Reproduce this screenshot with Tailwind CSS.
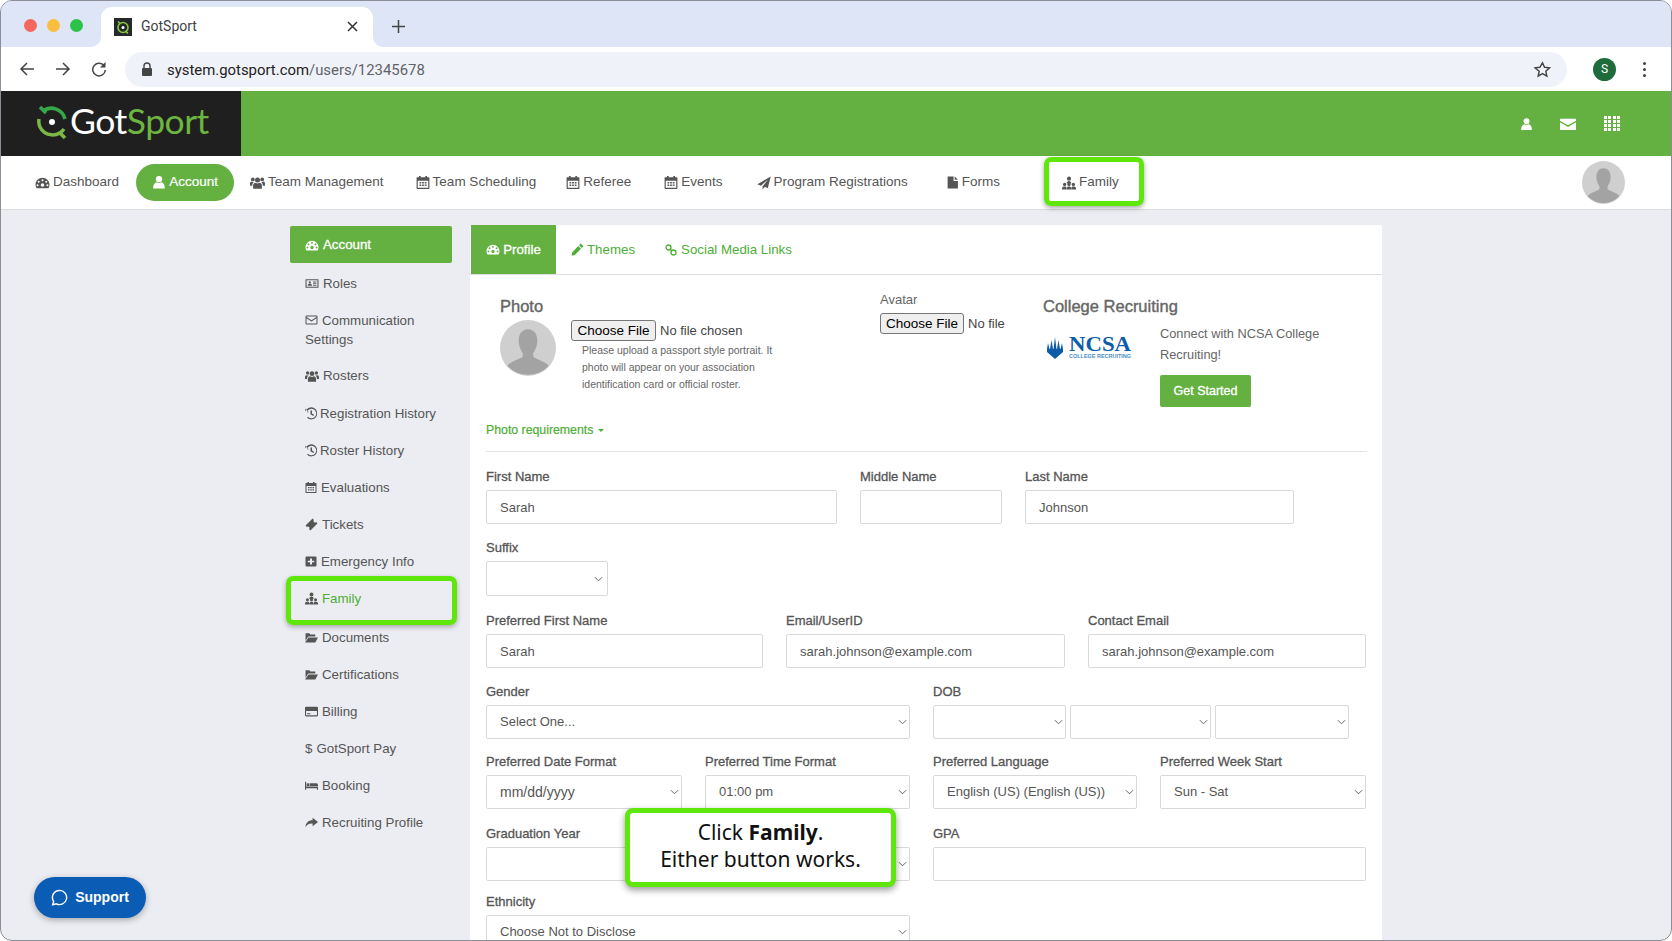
<!DOCTYPE html>
<html lang="en">
<head>
  <meta charset="UTF-8" />
  <title>GotSport</title>
  <script src="https://cdn.jsdelivr.net/npm/@tailwindcss/browser@4"></script>
</head>
<body class="bg-white overflow-hidden font-['Liberation_Sans',Arial,sans-serif]">

  <!-- Icon sprite -->
  <svg class="hidden">
    <symbol id="i-user" viewBox="0 0 24 24"><circle cx="12" cy="7" r="5.5"/><path d="M2 23c0-7 3-10 6-10.500 2.500 1.500 5.500 1.500 8 0 3 .5 6 3.500 6 10.500z"/></symbol>
    <symbol id="i-users" viewBox="0 0 24 24"><circle cx="12" cy="8" r="4"/><circle cx="4.500" cy="7" r="3"/><circle cx="19.500" cy="7" r="3"/><path d="M5 22v-5c0-3 2-4.500 4-4.500 2 1.500 4 1.500 6 0 2 0 4 1.500 4 4.500v5z"/><path d="M0 17v-3c0-2 1-3.500 2.500-3.500 1.500 1 3 1 4 .5-2 1-3 3-3 6zM24 17v-3c0-2-1-3.500-2.500-3.500-1.500 1-3 1-4 .5 2 1 3 3 3 6z"/></symbol>
    <symbol id="i-gauge" viewBox="0 0 24 24"><path fill-rule="evenodd" d="M12 3C5.500 3 0 8.500 0 15c0 2.500.7 4.500 2 6h20c1.300-1.500 2-3.500 2-6 0-6.500-5.500-12-12-12zM12 5.500a1.700 1.700 0 1 1 0 3.400 1.700 1.700 0 0 1 0-3.400zM5.500 8a1.700 1.700 0 1 1 0 3.400 1.700 1.700 0 0 1 0-3.400zM18.500 8a1.700 1.700 0 1 1 0 3.400 1.700 1.700 0 0 1 0-3.400zM3.500 14a1.700 1.700 0 1 1 0 3.400 1.700 1.700 0 0 1 0-3.400zM20.500 14a1.700 1.700 0 1 1 0 3.400 1.700 1.700 0 0 1 0-3.400zM12 12.500a3 3 0 0 1 3 3c0 1.700-1.300 3-3 3s-3-1.300-3-3a3 3 0 0 1 3-3z"/></symbol>
    <symbol id="i-cal" viewBox="0 0 24 24"><path fill-rule="evenodd" d="M2 3h3V1h3v2h8V1h3v2h3a1 1 0 0 1 1 1v18a1 1 0 0 1-1 1H2a1 1 0 0 1-1-1V4a1 1 0 0 1 1-1zM3 9v12h18V9z"/><path d="M6 11h3v2.500H6zM10.500 11h3v2.500h-3zM15 11h3v2.500h-3zM6 15.500h3V18H6zM10.500 15.500h3V18h-3zM15 15.500h3V18h-3z"/></symbol>
    <symbol id="i-plane" viewBox="0 0 24 24"><path d="M23.500 1 .5 14l6.500 2.500L19 6 9.500 18v5l4-4.500 5 2.500z"/></symbol>
    <symbol id="i-file" viewBox="0 0 24 24"><path d="M3 1h11v8h8v14H3zM16 1l6 6h-6z"/></symbol>
    <symbol id="i-family" viewBox="0 0 24 24"><circle cx="12" cy="4.500" r="3.500"/><path d="M8 13c0-3 2-4.500 4-4.500s4 1.500 4 4.500z"/><circle cx="4.500" cy="14.500" r="2.800"/><circle cx="12" cy="14.500" r="2.800"/><circle cx="19.500" cy="14.500" r="2.800"/><path d="M0 23v-2c0-2 2-3 4.500-3S8 19 8 21v2zM8.500 23v-2c0-2 1-3 3.500-3s3.500 1 3.500 3v2zM16 23v-2c0-2 1-3 3.500-3s4.500 1 4.500 3v2z"/></symbol>
    <symbol id="i-id" viewBox="0 0 24 24"><path fill-rule="evenodd" d="M1 4h22a1 1 0 0 1 1 1v14a1 1 0 0 1-1 1H1a1 1 0 0 1-1-1V5a1 1 0 0 1 1-1zM2 6v12h20V6z"/><circle cx="8" cy="10" r="2"/><path d="M4 16c0-2.500 1.500-3.500 4-3.500s4 1 4 3.500zM14 8.500h6V10h-6zM14 11.500h6V13h-6zM14 14.500h6V16h-6z"/></symbol>
    <symbol id="i-env" viewBox="0 0 24 24"><path fill-rule="evenodd" d="M2 3h20a2 2 0 0 1 2 2v14a2 2 0 0 1-2 2H2a2 2 0 0 1-2-2V5a2 2 0 0 1 2-2zM2 8.500V19h20V8.500l-10 6.500zM2 5v1.200L12 12.700 22 6.200V5z"/></symbol>
    <symbol id="i-mail" viewBox="0 0 24 24"><path d="M0 4h24v3L12 14 0 7zM0 9.500 12 16.500 24 9.500V21H0z"/></symbol>
    <symbol id="i-history" viewBox="0 0 24 24"><path d="M0 2l7.500 7.500H3.800A9.500 9.500 0 1 1 6 18.500l-1.800 2A12 12 0 1 0 1.200 7.500z"/><path d="M11 6h3v6l4 2.500-1.400 2.300-5.600-3.400z"/></symbol>
    <symbol id="i-ticket" viewBox="0 0 24 24"><path d="M14 1l2.500 2.500a2.500 2.500 0 0 0 4 4L23 10 10 23l-2.500-2.500a2.500 2.500 0 0 0-4-4L1 14z"/></symbol>
    <symbol id="i-plus" viewBox="0 0 24 24"><path fill-rule="evenodd" d="M3 2h18a2 2 0 0 1 2 2v16a2 2 0 0 1-2 2H3a2 2 0 0 1-2-2V4a2 2 0 0 1 2-2zM10 6v4.500H5.500v3H10V18h4v-4.500h4.500v-3H14V6z"/></symbol>
    <symbol id="i-folder" viewBox="0 0 24 24"><path d="M1 4h7l2 2.500h9V10H6l-5 8zM6.500 12H24l-5 9H0z"/></symbol>
    <symbol id="i-card" viewBox="0 0 24 24"><path fill-rule="evenodd" d="M2 3h20a2 2 0 0 1 2 2v14a2 2 0 0 1-2 2H2a2 2 0 0 1-2-2V5a2 2 0 0 1 2-2zM2 11v8h20v-8zM4 15h6v2H4z"/></symbol>
    <symbol id="i-bed" viewBox="0 0 24 24"><path d="M0 5h2v9h22v6h-2v-3H2v3H0z"/><rect x="3" y="8" width="5" height="5"/><path d="M9 8h12a3 3 0 0 1 3 3v2H9z"/></symbol>
    <symbol id="i-share" viewBox="0 0 24 24"><path d="M14 3l10 8-10 8v-5C8 14 4 15 1 21c0-8 5-13 13-13z"/></symbol>
    <symbol id="i-pencil" viewBox="0 0 24 24"><path d="M18 1l5 5-3 3-5-5zM13.500 5.500l5 5L7 22l-6 1.500L2.500 17z"/></symbol>
    <symbol id="i-link" viewBox="0 0 24 24"><g fill="none" stroke="currentColor" stroke-width="2.600"><circle cx="7" cy="7" r="5"/><circle cx="17" cy="17" r="5"/><path d="M9.500 9.500l5 5"/></g></symbol>
    <symbol id="i-chev" viewBox="0 0 10 6"><path d="M1 1l4 4 4-4" fill="none" stroke="#666" stroke-width="1.100"/></symbol>
    <symbol id="i-person" viewBox="0 0 54 54"><circle cx="27" cy="27" r="27" fill="#cfcfcf"/><path d="M27 9c6 0 9 5 9 11 0 5-2 9-4 12v3c0 2 10 4 15 9a27 27 0 0 1-40 0c5-5 15-7 15-9v-3c-2-3-4-7-4-12 0-6 3-11 9-11z" fill="#a3a3a3"/></symbol>
  </svg>

  <div class="relative w-full h-[941px] overflow-hidden rounded-[12px] border border-[#8b8e98] bg-[#ecedf2]">

    <!-- Browser tab strip -->
    <div class="relative flex items-end h-[46px] bg-[#dee5f6] pl-[23px]">
      <div class="flex items-center gap-[10px] h-[46px] pt-[2px]">
        <span class="w-[13px] h-[13px] rounded-full bg-[#f5685e]"></span>
        <span class="w-[13px] h-[13px] rounded-full bg-[#f9bd3f]"></span>
        <span class="w-[13px] h-[13px] rounded-full bg-[#2cc24a]"></span>
      </div>
      <div class="relative flex items-center ml-[18px] w-[272px] h-[40px] bg-white rounded-t-[11px] pl-[13px] pr-[15px] pb-[1px]">
        <svg class="absolute -left-[10px] bottom-0 w-[10px] h-[10px]" viewBox="0 0 10 10"><path d="M10 0v10H0a10 10 0 0 0 10-10z" fill="#fff"/></svg>
        <svg class="absolute -right-[10px] bottom-0 w-[10px] h-[10px]" viewBox="0 0 10 10"><path d="M0 0v10h10A10 10 0 0 1 0 0z" fill="#fff"/></svg>
        <svg class="w-[18px] h-[18px]" viewBox="0 0 18 18"><rect width="18" height="18" fill="#23282a"/><circle cx="9" cy="9.500" r="5" fill="none" stroke="#8cc63f" stroke-width="1.600"/><circle cx="9" cy="9.500" r="1.500" fill="#fff"/><path d="M4 3.500l2.500 2.500M11.500 13l2.500 2.500" stroke="#8cc63f" stroke-width="1.600"/></svg>
        <span class="ml-[9px] text-[14px] text-[#3f4246] font-['Roboto',sans-serif]">GotSport</span>
        <svg class="ml-auto w-[11px] h-[11px]" viewBox="0 0 11 11"><path d="M1 1l9 9M10 1l-9 9" stroke="#333" stroke-width="1.500"/></svg>
      </div>
      <svg class="ml-[19px] mb-[14px] w-[13px] h-[13px]" viewBox="0 0 13 13"><path d="M6.500 0v13M0 6.500h13" stroke="#444" stroke-width="1.500"/></svg>
    </div>

    <!-- Browser toolbar -->
    <div class="flex items-center h-[44px] bg-white pl-[18px]">
      <svg class="w-[16px] h-[16px] text-[#444]" viewBox="0 0 16 16"><path d="M15 8H2M8 2 2 8l6 6" fill="none" stroke="currentColor" stroke-width="1.500"/></svg>
      <svg class="ml-[20px] w-[16px] h-[16px]" viewBox="0 0 16 16"><path d="M1 8h13M8 2l6 6-6 6" fill="none" stroke="#444" stroke-width="1.500"/></svg>
      <svg class="ml-[20px] w-[16px] h-[16px]" viewBox="0 0 16 16"><path d="M13.500 5.500A6.300 6.300 0 1 0 14.300 9" fill="none" stroke="#444" stroke-width="1.500"/><path d="M14.500 1v5.500H9z" fill="#444"/></svg>
      <div class="flex items-center ml-[18px] w-[1442px] h-[35px] rounded-full bg-[#f0f2f9] pl-[16px] pr-[16px]">
        <svg class="w-[12px] h-[14px]" viewBox="0 0 12 14"><path d="M3 6V4a3 3 0 0 1 6 0v2" fill="none" stroke="#444" stroke-width="1.400"/><rect x="1" y="6" width="10" height="8" rx="1" fill="#444"/></svg>
        <span class="ml-[14px] pt-[2px] text-[14.9px] text-[#222] font-['Roboto',sans-serif]">system.gotsport.com<span class="text-[#5f6368]">/users/12345678</span></span>
        <svg class="ml-auto w-[17px] h-[17px]" viewBox="0 0 24 24"><path d="M12 2.500l2.900 6.400 6.900.8-5.100 4.700 1.400 6.900-6.100-3.500-6.100 3.500 1.400-6.900L1.300 9.700l6.900-.8z" fill="none" stroke="#444" stroke-width="2"/></svg>
      </div>
      <span class="flex items-center justify-center ml-[26px] w-[23px] h-[23px] rounded-full bg-[#1e6b3c] text-white text-[12px] font-['Roboto',sans-serif]">S</span>
      <div class="flex flex-col gap-[3px] ml-[27px]">
        <span class="w-[3px] h-[3px] rounded-full bg-[#444]"></span>
        <span class="w-[3px] h-[3px] rounded-full bg-[#444]"></span>
        <span class="w-[3px] h-[3px] rounded-full bg-[#444]"></span>
      </div>
    </div>

    <!-- GotSport header -->
    <header class="flex items-center h-[65px] bg-[#64b040]">
      <div class="flex items-center w-[240px] h-full bg-[#201f20] pl-[36px] pb-[2px]">
        <svg class="w-[32px] h-[36px]" viewBox="0 0 32 36"><path d="M6 6a14 14 0 0 1 22 8" fill="none" stroke="#37a84a" stroke-width="3.500"/><path d="M3 2l6 6" stroke="#37a84a" stroke-width="3.500"/><path d="M27 24a14 14 0 0 1-24-2 14 14 0 0 1-1-8" fill="none" stroke="#7ab648" stroke-width="3.500"/><path d="M22 27l6 6" stroke="#7ab648" stroke-width="3.500"/><circle cx="15" cy="17" r="3" fill="#fff"/></svg>
        <span class="ml-[1px] pb-[3px] text-[35.5px] leading-none tracking-[-0.5px] text-white font-['Lato',sans-serif]">Got<span class="text-[#6cb63f]">Sport</span></span>
      </div>
      <div class="flex items-center ml-auto pr-[51px] text-white">
        <svg class="w-[13px] h-[14px] fill-current"><use href="#i-user"/></svg>
        <svg class="ml-[27px] w-[16px] h-[16px] fill-current"><use href="#i-mail"/></svg>
        <div class="ml-[28px] grid grid-cols-4 gap-[1px] w-[16px]">
          <span class="w-[3px] h-[3px] bg-white"></span><span class="w-[3px] h-[3px] bg-white"></span><span class="w-[3px] h-[3px] bg-white"></span><span class="w-[3px] h-[3px] bg-white"></span>
          <span class="w-[3px] h-[3px] bg-white"></span><span class="w-[3px] h-[3px] bg-white"></span><span class="w-[3px] h-[3px] bg-white"></span><span class="w-[3px] h-[3px] bg-white"></span>
          <span class="w-[3px] h-[3px] bg-white"></span><span class="w-[3px] h-[3px] bg-white"></span><span class="w-[3px] h-[3px] bg-white"></span><span class="w-[3px] h-[3px] bg-white"></span>
          <span class="w-[3px] h-[3px] bg-white"></span><span class="w-[3px] h-[3px] bg-white"></span><span class="w-[3px] h-[3px] bg-white"></span><span class="w-[3px] h-[3px] bg-white"></span>
        </div>
      </div>
    </header>

    <!-- Main nav -->
    <nav class="relative flex items-center h-[54px] bg-white border-b border-[#dcdde0] text-[13.5px] text-[#555] pl-[34px]">
      <a class="flex items-center gap-[3px]"><svg class="w-[15px] h-[14px] fill-current"><use href="#i-gauge"/></svg>Dashboard</a>
      <a class="flex items-center justify-center gap-[3px] ml-[17px] -mt-[1px] w-[98px] h-[37px] rounded-full bg-[#64b040] text-white [-webkit-text-stroke:0.2px]"><svg class="w-[14px] h-[14px] fill-current"><use href="#i-user"/></svg>Account</a>
      <a class="flex items-center gap-[3px] ml-[16px]"><svg class="w-[15px] h-[15px] fill-current"><use href="#i-users"/></svg>Team Management</a>
      <a class="flex items-center gap-[3px] ml-[32px]"><svg class="w-[14px] h-[15px] fill-current"><use href="#i-cal"/></svg>Team Scheduling</a>
      <a class="flex items-center gap-[3px] ml-[30px]"><svg class="w-[14px] h-[15px] fill-current"><use href="#i-cal"/></svg>Referee</a>
      <a class="flex items-center gap-[3px] ml-[33px]"><svg class="w-[14px] h-[15px] fill-current"><use href="#i-cal"/></svg>Events</a>
      <a class="flex items-center gap-[3px] ml-[34px]"><svg class="w-[14px] h-[14px] fill-current"><use href="#i-plane"/></svg>Program Registrations</a>
      <a class="flex items-center gap-[3px] ml-[38px]"><svg class="w-[13px] h-[15px] fill-current"><use href="#i-file"/></svg>Forms</a>
      <a class="relative flex items-center gap-[3px] ml-[62px]">
        <svg class="w-[14px] h-[14px] fill-current"><use href="#i-family"/></svg>Family
        <span class="absolute -left-[18px] -right-[25px] -top-[15px] -bottom-[13px] rounded-[7px] border-[5px] border-[#5fe60a] shadow-[0_2px_5px_rgba(0,0,0,0.35)]"></span>
      </a>
      <svg class="ml-auto mr-[46px] w-[43px] h-[43px]"><use href="#i-person"/></svg>
    </nav>

    <div class="flex items-start pl-[289px] pt-[16px]">

      <!-- Side menu -->
      <aside class="w-[162px] text-[13.3px] text-[#555]">
        <a class="flex items-center gap-[4px] h-[37px] pl-[15px] pt-[1px] rounded-[2px] bg-[#64b040] text-white [-webkit-text-stroke:0.3px]"><svg class="w-[14px] h-[13px] fill-current"><use href="#i-gauge"/></svg>Account</a>
        <a class="flex items-center gap-[4px] h-[37px] mt-[2px] pl-[15px]"><svg class="w-[14px] h-[13px] fill-current"><use href="#i-id"/></svg>Roles</a>
        <a class="block h-[37px] pl-[15px] pt-[9px] leading-[19px] mb-[18px]"><svg class="inline w-[13px] h-[12px] mr-[4px] -mt-[2px] fill-current"><use href="#i-env"/></svg>Communication Settings</a>
        <a class="flex items-center gap-[4px] h-[37px] pl-[15px]"><svg class="w-[14px] h-[14px] fill-current"><use href="#i-users"/></svg>Rosters</a>
        <a class="flex items-center gap-[3px] h-[37px] mt-[1px] pl-[15px]"><svg class="w-[12px] h-[13px] fill-current"><use href="#i-history"/></svg>Registration History</a>
        <a class="flex items-center gap-[3px] h-[37px] pl-[15px]"><svg class="w-[12px] h-[13px] fill-current"><use href="#i-history"/></svg>Roster History</a>
        <a class="flex items-center gap-[4px] h-[37px] pl-[15px]"><svg class="w-[12px] h-[13px] fill-current"><use href="#i-cal"/></svg>Evaluations</a>
        <a class="flex items-center gap-[4px] h-[37px] pl-[15px]"><svg class="w-[13px] h-[13px] fill-current"><use href="#i-ticket"/></svg>Tickets</a>
        <a class="flex items-center gap-[4px] h-[37px] pl-[15px]"><svg class="w-[12px] h-[13px] fill-current"><use href="#i-plus"/></svg>Emergency Info</a>
        <a class="relative flex items-center gap-[4px] h-[37px] pl-[15px] text-[#4cae35]">
          <svg class="w-[13px] h-[13px] fill-[#555]"><use href="#i-family"/></svg>Family
          <span class="absolute -left-[4px] -right-[5px] -top-[4px] -bottom-[8px] rounded-[7px] border-[5px] border-[#5fe60a] shadow-[0_2px_5px_rgba(0,0,0,0.3)]"></span>
        </a>
        <a class="flex items-center gap-[4px] h-[37px] mt-[2px] pl-[15px]"><svg class="w-[13px] h-[13px] fill-current"><use href="#i-folder"/></svg>Documents</a>
        <a class="flex items-center gap-[4px] h-[37px] pl-[15px]"><svg class="w-[13px] h-[13px] fill-current"><use href="#i-folder"/></svg>Certifications</a>
        <a class="flex items-center gap-[4px] h-[37px] pl-[15px]"><svg class="w-[13px] h-[13px] fill-current"><use href="#i-card"/></svg>Billing</a>
        <a class="flex items-center gap-[4px] h-[37px] pl-[15px]"><span>$</span>GotSport Pay</a>
        <a class="flex items-center gap-[4px] h-[37px] pl-[15px]"><svg class="w-[13px] h-[13px] fill-current"><use href="#i-bed"/></svg>Booking</a>
        <a class="flex items-center gap-[4px] h-[37px] pl-[15px]"><svg class="w-[13px] h-[13px] fill-current"><use href="#i-share"/></svg>Recruiting Profile</a>
      </aside>

      <!-- Profile panel -->
      <main class="ml-[18px] -mt-[1px] w-[912px] h-[760px] bg-white rounded-t-[2px] text-[#555]">
        <div class="flex items-center h-[50px] border-b border-[#dcdde0] text-[13.3px] text-[#4cae35]">
          <a class="flex items-center justify-center gap-[3px] ml-[1px] w-[85px] h-full bg-[#64b040] text-white [-webkit-text-stroke:0.3px]"><svg class="w-[14px] h-[13px] fill-current"><use href="#i-gauge"/></svg>Profile</a>
          <a class="flex items-center gap-[3px] ml-[15px]"><svg class="w-[13px] h-[13px] fill-current"><use href="#i-pencil"/></svg>Themes</a>
          <a class="flex items-center gap-[4px] ml-[30px]"><svg class="w-[12px] h-[12px] fill-current"><use href="#i-link"/></svg>Social Media Links</a>
        </div>

        <div class="pl-[16px] pr-[15px]">
          <!-- Photo / avatar / college recruiting -->
          <div class="relative flex h-[177px] border-b border-[#e4e5e8]">
            <div class="w-[394px] pl-[14px] pt-[21px]">
              <h3 class="text-[16.5px] text-[#666] leading-[20px] [-webkit-text-stroke:0.4px]">Photo</h3>
              <div class="flex mt-[4px]">
                <svg class="w-[56px] h-[56px] shrink-0"><use href="#i-person"/></svg>
                <div class="ml-[15px]">
                  <div class="flex items-center text-[13px] text-[#444]">
                    <button class="w-[85px] h-[21px] rounded-[3px] border border-[#767676] bg-[#efefef] text-[13.5px] text-black">Choose File</button>
                    <span class="ml-[4px]">No file chosen</span>
                  </div>
                  <p class="ml-[11px] mt-[1px] w-[200px] text-[10.5px] leading-[17px] text-[#666]">Please upload a passport style portrait. It photo will appear on your association identification card or official roster.</p>
                </div>
              </div>
            </div>
            <div class="w-[163px] pt-[17px]">
              <label class="block text-[13px] text-[#666] leading-[16px]">Avatar</label>
              <div class="flex items-center mt-[5px] text-[13px] text-[#444]">
                <button class="w-[84px] h-[21px] shrink-0 rounded-[3px] border border-[#767676] bg-[#efefef] text-[13.5px] text-black">Choose File</button>
                <span class="ml-[4px]">No file</span>
              </div>
            </div>
            <div class="pt-[21px]">
              <h3 class="text-[16.5px] text-[#666] leading-[20px] [-webkit-text-stroke:0.4px]">College Recruiting</h3>
              <div class="flex mt-[8px]">
                <svg class="ml-[3px] mt-[10px] w-[86px] h-[26px]" viewBox="0 0 86 26">
                  <path d="M1 15h16v3l-8 7-8-7zM1 15l1-6 1.500 6zM4 15l1.500-9L7 15zM7.500 15 9 3l1.500 12zM11 15l1.500-9L14 15zM14.500 15 16 9l1 6z" fill="#0d5ca8"/>
                  <text x="23" y="17" font-family="Liberation Serif" font-weight="700" font-size="22" fill="#0d5ca8" textLength="62" lengthAdjust="spacingAndGlyphs">NCSA</text>
                  <text x="23" y="24" font-family="Liberation Sans" font-weight="700" font-size="5.500" fill="#4a8cc8" textLength="62" lengthAdjust="spacingAndGlyphs">COLLEGE RECRUITING</text>
                </svg>
                <div class="ml-[28px] -mt-[1px]">
                  <p class="w-[180px] text-[12.8px] leading-[21px] text-[#666]">Connect with NCSA College Recruiting!</p>
                  <a class="flex items-center justify-center mt-[10px] w-[91px] h-[32px] rounded-[2px] bg-[#64b040] text-white text-[12.5px] [-webkit-text-stroke:0.3px]">Get Started</a>
                </div>
              </div>
            </div>
            <a class="absolute left-0 top-[147px] text-[12.3px] leading-[16px] text-[#4cae35] [-webkit-text-stroke:0.2px]">Photo requirements <span class="inline-block w-0 h-0 ml-[1px] align-middle border-x-[3px] border-t-[3px] border-x-transparent border-t-[#4cae35]"></span></a>
          </div>

          <!-- Name -->
          <div class="flex mt-[16px]">
            <div class="w-[351px]">
              <label class="block h-[18px] mb-[4px] text-[13px] leading-[18px] [-webkit-text-stroke:0.3px]">First Name</label>
              <input class="w-full h-[34px] border border-[#d8d9dc] rounded-[2px] px-[13px] text-[13px] text-[#555]" value="Sarah" />
            </div>
            <div class="w-[142px] ml-[23px]">
              <label class="block h-[18px] mb-[4px] text-[13px] leading-[18px] [-webkit-text-stroke:0.3px]">Middle Name</label>
              <input class="w-full h-[34px] border border-[#d8d9dc] rounded-[2px] px-[13px] text-[13px] text-[#555]" />
            </div>
            <div class="w-[269px] ml-[23px]">
              <label class="block h-[18px] mb-[4px] text-[13px] leading-[18px] [-webkit-text-stroke:0.3px]">Last Name</label>
              <input class="w-full h-[34px] border border-[#d8d9dc] rounded-[2px] px-[13px] text-[13px] text-[#555]" value="Johnson" />
            </div>
          </div>

          <!-- Suffix -->
          <div class="mt-[15px]">
            <label class="block h-[18px] mb-[4px] text-[13px] leading-[18px] [-webkit-text-stroke:0.3px]">Suffix</label>
            <div class="flex items-center justify-end w-[122px] h-[35px] border border-[#d8d9dc] rounded-[2px] pr-[4px]"><svg class="w-[9px] h-[6px]"><use href="#i-chev"/></svg></div>
          </div>

          <!-- Preferred name / emails -->
          <div class="flex mt-[16px]">
            <div class="w-[277px]">
              <label class="block h-[18px] mb-[4px] text-[13px] leading-[18px] [-webkit-text-stroke:0.3px]">Preferred First Name</label>
              <input class="w-full h-[34px] border border-[#d8d9dc] rounded-[2px] px-[13px] text-[13px] text-[#555]" value="Sarah" />
            </div>
            <div class="w-[279px] ml-[23px]">
              <label class="block h-[18px] mb-[4px] text-[13px] leading-[18px] [-webkit-text-stroke:0.3px]">Email/UserID</label>
              <input class="w-full h-[34px] border border-[#d8d9dc] rounded-[2px] px-[13px] text-[13px] text-[#555]" value="sarah.johnson@example.com" />
            </div>
            <div class="w-[278px] ml-[23px]">
              <label class="block h-[18px] mb-[4px] text-[13px] leading-[18px] [-webkit-text-stroke:0.3px]">Contact Email</label>
              <input class="w-full h-[34px] border border-[#d8d9dc] rounded-[2px] px-[13px] text-[13px] text-[#555]" value="sarah.johnson@example.com" />
            </div>
          </div>

          <!-- Gender / DOB -->
          <div class="flex mt-[15px]">
            <div class="w-[424px]">
              <label class="block h-[18px] mb-[4px] text-[13px] leading-[18px] [-webkit-text-stroke:0.3px]">Gender</label>
              <div class="flex items-center justify-between h-[34px] border border-[#d8d9dc] rounded-[2px] pl-[13px] pr-[2px] text-[13px]">Select One...<svg class="w-[9px] h-[6px]"><use href="#i-chev"/></svg></div>
            </div>
            <div class="ml-[23px]">
              <label class="block h-[18px] mb-[4px] text-[13px] leading-[18px] [-webkit-text-stroke:0.3px]">DOB</label>
              <div class="flex gap-[4px]">
                <div class="flex items-center justify-end w-[133px] h-[34px] border border-[#d8d9dc] rounded-[2px] pr-[2px]"><svg class="w-[9px] h-[6px]"><use href="#i-chev"/></svg></div>
                <div class="flex items-center justify-end w-[141px] h-[34px] border border-[#d8d9dc] rounded-[2px] pr-[2px]"><svg class="w-[9px] h-[6px]"><use href="#i-chev"/></svg></div>
                <div class="flex items-center justify-end w-[134px] h-[34px] border border-[#d8d9dc] rounded-[2px] pr-[2px]"><svg class="w-[9px] h-[6px]"><use href="#i-chev"/></svg></div>
              </div>
            </div>
          </div>

          <!-- Preferences -->
          <div class="flex mt-[14px]">
            <div class="w-[196px]">
              <label class="block h-[18px] mb-[4px] text-[13px] leading-[18px] [-webkit-text-stroke:0.3px]">Preferred Date Format</label>
              <div class="flex items-center justify-between h-[34px] border border-[#d8d9dc] rounded-[2px] pl-[13px] pr-[2px] text-[14px]">mm/dd/yyyy<svg class="w-[9px] h-[6px]"><use href="#i-chev"/></svg></div>
            </div>
            <div class="w-[205px] ml-[23px]">
              <label class="block h-[18px] mb-[4px] text-[13px] leading-[18px] [-webkit-text-stroke:0.3px]">Preferred Time Format</label>
              <div class="flex items-center justify-between h-[34px] border border-[#d8d9dc] rounded-[2px] pl-[13px] pr-[2px] text-[13px]">01:00 pm<svg class="w-[9px] h-[6px]"><use href="#i-chev"/></svg></div>
            </div>
            <div class="w-[204px] ml-[23px]">
              <label class="block h-[18px] mb-[4px] text-[13px] leading-[18px] [-webkit-text-stroke:0.3px]">Preferred Language</label>
              <div class="flex items-center justify-between h-[34px] border border-[#d8d9dc] rounded-[2px] pl-[13px] pr-[2px] text-[13px]">English (US) (English (US))<svg class="w-[9px] h-[6px]"><use href="#i-chev"/></svg></div>
            </div>
            <div class="w-[206px] ml-[23px]">
              <label class="block h-[18px] mb-[4px] text-[13px] leading-[18px] [-webkit-text-stroke:0.3px]">Preferred Week Start</label>
              <div class="flex items-center justify-between h-[34px] border border-[#d8d9dc] rounded-[2px] pl-[13px] pr-[2px] text-[13px]">Sun - Sat<svg class="w-[9px] h-[6px]"><use href="#i-chev"/></svg></div>
            </div>
          </div>

          <!-- Graduation / GPA -->
          <div class="flex mt-[16px]">
            <div class="w-[424px]">
              <label class="block h-[18px] mb-[4px] text-[13px] leading-[18px] [-webkit-text-stroke:0.3px]">Graduation Year</label>
              <div class="flex items-center justify-end h-[34px] border border-[#d8d9dc] rounded-[2px] pr-[2px]"><svg class="w-[9px] h-[6px]"><use href="#i-chev"/></svg></div>
            </div>
            <div class="w-[433px] ml-[23px]">
              <label class="block h-[18px] mb-[4px] text-[13px] leading-[18px] [-webkit-text-stroke:0.3px]">GPA</label>
              <input class="w-full h-[34px] border border-[#d8d9dc] rounded-[2px] px-[13px] text-[13px]" />
            </div>
          </div>

          <!-- Ethnicity -->
          <div class="w-[424px] mt-[12px]">
            <label class="block h-[18px] mb-[4px] text-[13px] leading-[18px] [-webkit-text-stroke:0.3px]">Ethnicity</label>
            <div class="flex items-center justify-between h-[34px] border border-[#d8d9dc] rounded-[2px] pl-[13px] pr-[2px] text-[13px]">Choose Not to Disclose<svg class="w-[9px] h-[6px]"><use href="#i-chev"/></svg></div>
          </div>
        </div>
      </main>
    </div>

    <!-- Support button -->
    <a class="absolute left-[33px] top-[876px] flex items-center justify-center gap-[7px] w-[112px] h-[41px] rounded-full bg-[#0b5cb5] text-white text-[14px] font-bold shadow-[0_2px_6px_rgba(0,0,0,0.3)]">
      <svg class="w-[17px] h-[17px]" viewBox="0 0 18 18"><path d="M9 1.500a7.500 7.500 0 1 1-3.300 14.200L1.800 16.700l1-3.500A7.500 7.500 0 0 1 9 1.500z" fill="none" stroke="#fff" stroke-width="1.500"/></svg>Support
    </a>

    <!-- Tutorial callout -->
    <div class="absolute left-[624px] top-[807px] flex flex-col items-center justify-center w-[271px] h-[79px] rounded-[8px] border-[5px] border-[#5fe60a] bg-white pb-[3px] shadow-[0_3px_7px_rgba(0,0,0,0.4)] text-[21px] leading-[27px] text-[#111] font-['Noto_Sans',sans-serif]">
      <p>Click <b>Family</b>.</p>
      <p>Either button works.</p>
    </div>
  </div>
</body>
</html>
